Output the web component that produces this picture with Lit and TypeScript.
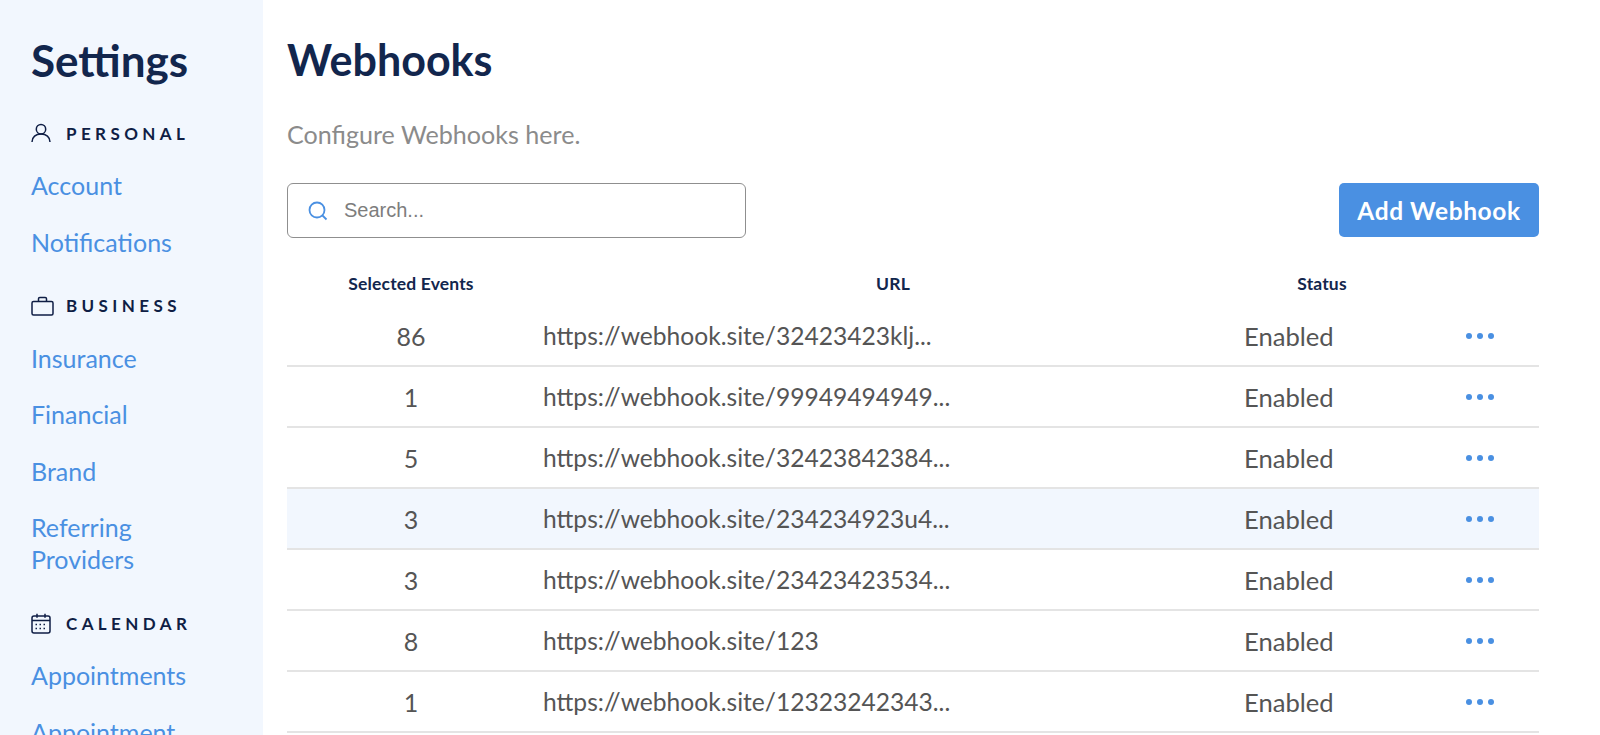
import { LitElement, html, css, svg } from "lit";
import { customElement } from "lit/decorators.js";

const rows = [
  ["86", "https://webhook.site/32423423klj..."],
  ["1", "https://webhook.site/99949494949..."],
  ["5", "https://webhook.site/32423842384..."],
  ["3", "https://webhook.site/234234923u4..."],
  ["3", "https://webhook.site/23423423534..."],
  ["8", "https://webhook.site/123"],
  ["1", "https://webhook.site/12323242343..."],
];

const userIcon = svg`<circle cx="10" cy="6.200" r="4.700"/><path d="M1 19c0-5 3.800-8 9-8s9 3 9 8"/>`;
const bagIcon = svg`<rect x="1" y="5.500" width="21" height="13.500" rx="1.500"/><path d="M7.500 5.500V2.800c0-.8.6-1.300 1.300-1.300h5.400c.7 0 1.300.5 1.300 1.300v2.700"/>`;
const calIcon = svg`<rect x="1" y="3" width="18" height="17" rx="2"/><path d="M1 7.500h18M6 .8v4M14 .8v4"/><path stroke-dasharray="1.500 2.500" d="M4.500 11.500h11M4.500 15.500h11"/>`;

@customElement("app-root")
export class AppRoot extends LitElement {
  static styles = css`
    :host {
      display: block;
      height: 735px;
      overflow: hidden;
      font-family: Lato, "Open Sans", sans-serif;
      background: #fff;
    }
    .page { display: flex; height: 735px; overflow: hidden; }
    .side {
      width: 263px;
      flex: none;
      box-sizing: border-box;
      background: #f2f7fe;
      padding: 37px 20px 0 31px;
      overflow: hidden;
    }
    .side h1 {
      margin: 0 0 38px;
      font-size: 44px;
      line-height: 46px;
      font-weight: 700;
      color: #12264d;
    }
    .sec {
      display: flex;
      align-items: center;
      height: 24px;
      margin: 0 0 24px;
      font-size: 17px;
      font-weight: 700;
      letter-spacing: 4.400px;
      color: #0f1e45;
    }
    .ico { width: 35px; flex: none; display: flex; }
    .sec svg { fill: none; stroke: #0f1e45; stroke-width: 1.500; }
    .links { display: flex; flex-direction: column; gap: 24.600px; margin-bottom: 36px; }
    .links a {
      width: 130px;
      font-size: 25px;
      line-height: 32px;
      color: #4a90e2;
    }
    .main { flex: 1; box-sizing: border-box; padding: 37px 61px 0 24px; min-width: 0; }
    .main h2 {
      margin: 0 0 35px;
      font-size: 43px;
      line-height: 46px;
      font-weight: 700;
      color: #12264d;
    }
    .sub { font-size: 25.100px; line-height: 32px; color: #8b8b8b; margin-bottom: 32px; }
    .bar { display: flex; justify-content: space-between; align-items: flex-start; }
    .search {
      width: 459px;
      height: 55px;
      box-sizing: border-box;
      border: 1.500px solid #8f8f8f;
      border-radius: 6px;
      display: flex;
      align-items: center;
      padding-left: 20px;
      gap: 16px;
      margin-top: 1px;
      font-family: "Liberation Sans", sans-serif;
      font-size: 20px;
      color: #7d7d7d;
    }
    .search svg { fill: none; stroke: #4a90e2; stroke-width: 1.800; flex: none; }
    .btn {
      width: 200px;
      height: 54px;
      margin-top: 1px;
      border-radius: 5px;
      background: #4a90e2;
      color: #fff;
      font-size: 24.500px;
      font-weight: 700;
      display: flex;
      align-items: center;
      justify-content: center;
      letter-spacing: 0.600px;
    }
    .row, .head {
      display: grid;
      grid-template-columns: 248px 704px 166px 1fr;
      align-items: center;
    }
    .head {
      margin: 29px 0 7px;
      height: 32px;
      font-size: 17.500px;
      font-weight: 700;
      letter-spacing: 0.150px;
      color: #12264d;
      text-align: center;
    }
    .head .u { padding-left: 12px; }
    .row {
      height: 61px;
      box-sizing: border-box;
      border-bottom: 2px solid #e4e4e4;
      color: #555;
    }
    .row.hl { background: #f2f7fe; }
    .row .n { text-align: center; font-size: 25px; }
    .row .u { padding-left: 8px; font-size: 24.600px; }
    .row .s { padding-left: 5px; font-size: 25.600px; }
    .dots { display: flex; gap: 5px; padding-left: 61px; }
    .dots i { width: 6px; height: 6px; border-radius: 50%; background: #4a90e2; }
  `;

  render() {
    const sec = (label: string, w: number, h: number, vb: string, icon: unknown) => html`
      <div class="sec"><span class="ico"><svg width=${w} height=${h} viewBox=${vb}>${icon}</svg></span><span>${label}</span></div>`;
    return html`<div class="page">
      <aside class="side">
        <h1>Settings</h1>
        ${sec("PERSONAL", 20, 20, "0 0 20 20", userIcon)}
        <div class="links"><a>Account</a><a>Notifications</a></div>
        ${sec("BUSINESS", 23, 20, "0 0 23 20", bagIcon)}
        <div class="links"><a>Insurance</a><a>Financial</a><a>Brand</a><a>Referring Providers</a></div>
        ${sec("CALENDAR", 20, 21, "0 0 20 21", calIcon)}
        <div class="links"><a>Appointments</a><a>Appointment</a></div>
      </aside>
      <main class="main">
        <h2>Webhooks</h2>
        <div class="sub">Configure Webhooks here.</div>
        <div class="bar">
          <div class="search">
            <svg width="20" height="20" viewBox="0 0 20 20"><circle cx="9" cy="9" r="7.500"/><path d="M14.500 14.500l4 4"/></svg>
            <span>Search...</span>
          </div>
          <div class="btn">Add Webhook</div>
        </div>
        <div class="head"><div>Selected Events</div><div class="u">URL</div><div>Status</div><div></div></div>
        ${rows.map(
          (r, i) => html`<div class="row ${i === 3 ? "hl" : ""}">
            <div class="n">${r[0]}</div>
            <div class="u">${r[1]}</div>
            <div class="s">Enabled</div>
            <div class="dots"><i></i><i></i><i></i></div>
          </div>`
        )}
      </main>
    </div>`;
  }
}
